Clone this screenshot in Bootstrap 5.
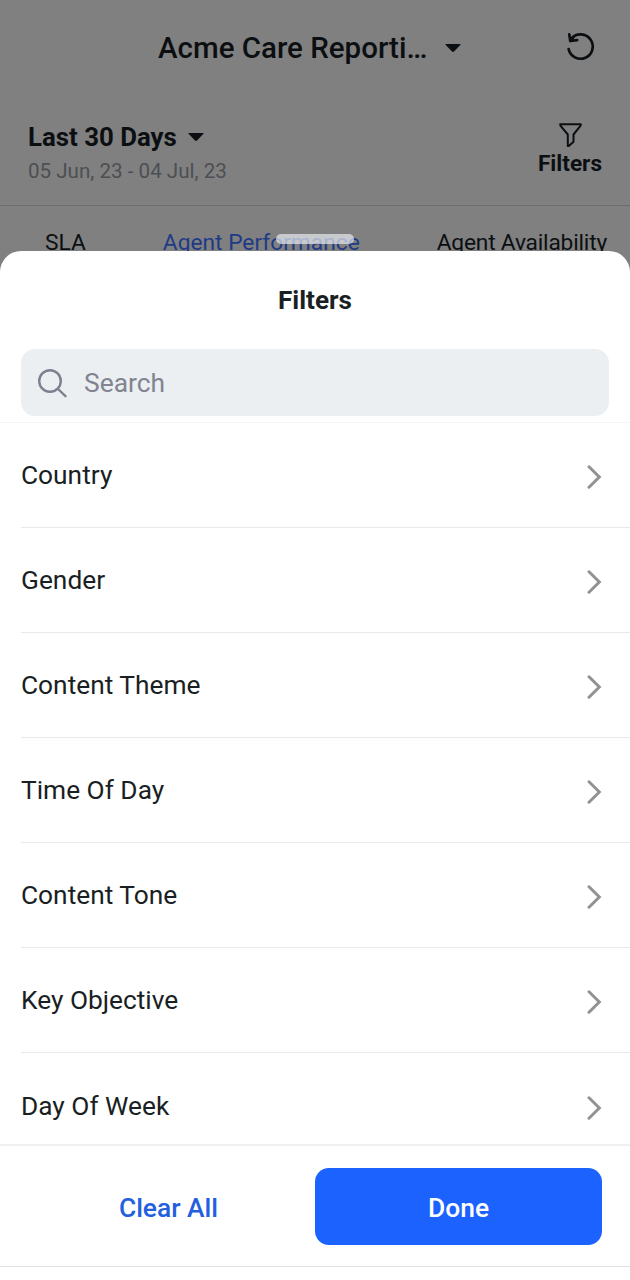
<!DOCTYPE html>
<html lang="en">
<head>
<meta charset="utf-8">
<meta name="viewport" content="width=device-width, initial-scale=1">
<title>Filters</title>
<link href="https://cdn.jsdelivr.net/npm/bootstrap@5.3.0/dist/css/bootstrap.min.css" rel="stylesheet">
<style>
  body { font-family: Roboto, "Liberation Sans", sans-serif; color: #1a1f24; height: 1280px; }
  svg { display: block; flex: none; }
  .report { background: #808080; color: #0c0f12; height: 1280px; }
  .title-bar { height: 96px; padding-left: 158px; }
  .title-text { width: 287px; font-size: 29.5px; font-weight: 500; line-height: 34px; white-space: nowrap; }
  .refresh-icon { margin: -4px 0 0 104px; }
  .range-bar { height: 110px; border-bottom: 1px solid #6c6d6e; padding: 25px 28px 0; }
  .range-name { font-size: 25.8px; font-weight: 700; line-height: 32px; gap: 11px; }
  .range-dates { font-size: 20.6px; line-height: 26px; color: #4c4f53; margin-top: 5px; }
  .filter-label { font-size: 22.6px; font-weight: 700; line-height: 28px; margin-top: 1px; }
  .tab-strip { font-size: 22.75px; line-height: 28px; padding: 23px 23px 0 45px; }
  .tab-active { color: #203b86; }
  .tab-last { letter-spacing: -.2px; }
  .grip { top: 234px; width: 78px; height: 10px; border-radius: 5px; background: rgba(235,237,242,.68); }
  .sheet { top: 251px; border-radius: 21px 21px 0 0; background: #fff; }
  .sheet-title { height: 98px; font-size: 26.1px; font-weight: 700; line-height: 98px; }
  .search-box { height: 67px; margin: 0 21px 6px; padding: 2px 16px 0; background: #ebeff2; border-radius: 14px; color: #82848f; font-size: 26.4px; gap: 15px; }
  .options { height: 722px; border-top: 1px solid #f5f5f6; font-size: 26.3px; }
  .option { height: 105px; margin-left: 21px; padding: 2px 27px 0 0; border-bottom: 1.6px solid #e8e9eb; }
  .option:last-child { border: 0; }
  .actions { height: 123px; border-top: 2px solid #eff0f1; border-bottom: 1px solid #e0e1e2; padding: 1px 28px 0 22px; }
  .btn-clear, .btn-done { font-size: 26.4px; font-weight: 500; border: 0; height: 77px; border-radius: 14px; padding: 4px 0 0; }
  .btn-clear { width: 293px; color: #2360df; }
  .btn-done, .btn-done:hover { width: 287px; background: #1b62ff; color: #fff; }
</style>
</head>
<body class="position-relative overflow-hidden">
<main class="report">
  <header class="title-bar d-flex align-items-center">
    <div class="title-text">Acme Care Reporti…</div>
    <svg width="16" height="9" viewBox="0 0 16 9"><path d="M1 0h14q1 0 .3 1L9 7.6q-1 .8-2 0L.7 1Q0 0 1 0z" fill="#0c0f12"/></svg>
    <svg class="refresh-icon" width="32" height="32" viewBox="0 0 32 32" fill="none" stroke="#0c0f12" stroke-width="2.7" stroke-linecap="round" stroke-linejoin="round"><path d="M3.6 19a12.2 12.2 0 1 0 3-10.8"/><path d="M4.2 4.3 5.3 11 12.2 10.2M5.3 11 8.4 7.2"/></svg>
  </header>
  <section class="range-bar d-flex justify-content-between">
    <div>
      <div class="range-name d-flex align-items-center">Last 30 Days
        <svg width="16" height="9" viewBox="0 0 16 9"><path d="M1 0h14q1 0 .3 1L9 7.6q-1 .8-2 0L.7 1Q0 0 1 0z" fill="#0c0f12"/></svg>
      </div>
      <div class="range-dates">05 Jun, 23 - 04 Jul, 23</div>
    </div>
    <div class="d-flex flex-column align-items-center">
      <svg width="26" height="28" viewBox="0 0 26 28" fill="none" stroke="#0c0f12" stroke-width="2" stroke-linejoin="round"><path d="M3.2 3.2h20.6l-.2 1.5L16.5 13.5v7.2L11.8 25h-1V13.5L3.4 4.7z"/></svg>
      <div class="filter-label">Filters</div>
    </div>
  </section>
  <nav class="tab-strip d-flex justify-content-between">
    <span>SLA</span><span class="tab-active">Agent Performance</span><span class="tab-last">Agent Availability</span>
  </nav>
</main>
<div class="grip position-absolute start-50 translate-middle-x"></div>
<section class="sheet position-absolute start-0 end-0 bottom-0 d-flex flex-column overflow-hidden">
  <div class="sheet-title text-center">Filters</div>
  <div class="search-box d-flex align-items-center flex-shrink-0">
    <svg width="32" height="32" viewBox="0 0 32 32" fill="none" stroke="#7d808f" stroke-width="2.4" stroke-linecap="round"><circle cx="13" cy="13" r="10.8"/><path d="m21 21 7.5 7.2"/></svg>
    <span>Search</span>
  </div>
  <div class="options overflow-hidden flex-shrink-0">
    <div class="option d-flex align-items-center justify-content-between"><span>Country</span><svg width="18" height="26" viewBox="0 0 18 26" fill="none" stroke="#929292" stroke-width="3" stroke-linecap="round"><path d="M4 3.8 14.3 14 4 24.2"/></svg></div>
    <div class="option d-flex align-items-center justify-content-between"><span>Gender</span><svg width="18" height="26" viewBox="0 0 18 26" fill="none" stroke="#929292" stroke-width="3" stroke-linecap="round"><path d="M4 3.8 14.3 14 4 24.2"/></svg></div>
    <div class="option d-flex align-items-center justify-content-between"><span>Content Theme</span><svg width="18" height="26" viewBox="0 0 18 26" fill="none" stroke="#929292" stroke-width="3" stroke-linecap="round"><path d="M4 3.8 14.3 14 4 24.2"/></svg></div>
    <div class="option d-flex align-items-center justify-content-between"><span>Time Of Day</span><svg width="18" height="26" viewBox="0 0 18 26" fill="none" stroke="#929292" stroke-width="3" stroke-linecap="round"><path d="M4 3.8 14.3 14 4 24.2"/></svg></div>
    <div class="option d-flex align-items-center justify-content-between"><span>Content Tone</span><svg width="18" height="26" viewBox="0 0 18 26" fill="none" stroke="#929292" stroke-width="3" stroke-linecap="round"><path d="M4 3.8 14.3 14 4 24.2"/></svg></div>
    <div class="option d-flex align-items-center justify-content-between"><span>Key Objective</span><svg width="18" height="26" viewBox="0 0 18 26" fill="none" stroke="#929292" stroke-width="3" stroke-linecap="round"><path d="M4 3.8 14.3 14 4 24.2"/></svg></div>
    <div class="option d-flex align-items-center justify-content-between"><span>Day Of Week</span><svg width="18" height="26" viewBox="0 0 18 26" fill="none" stroke="#929292" stroke-width="3" stroke-linecap="round"><path d="M4 3.8 14.3 14 4 24.2"/></svg></div>
  </div>
  <footer class="actions d-flex align-items-center flex-shrink-0">
    <button class="btn btn-clear" type="button">Clear All</button>
    <button class="btn btn-done" type="button">Done</button>
  </footer>
</section>
<script src="https://cdn.jsdelivr.net/npm/bootstrap@5.3.0/dist/js/bootstrap.bundle.min.js"></script>
</body>
</html>
